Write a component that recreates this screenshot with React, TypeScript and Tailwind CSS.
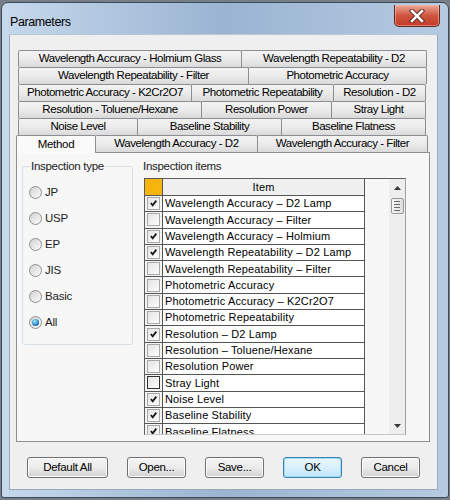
import React from "react";

type Tab = { label: string; w: string };

const TAB_ROWS: Tab[][] = [
  [
    { label: "Wavelength Accuracy - Holmium Glass", w: "w-[224px]" },
    { label: "Wavelength Repeatability - D2", w: "w-[186px]" },
  ],
  [
    { label: "Wavelength Repeatability - Filter", w: "w-[231px]" },
    { label: "Photometric Accuracy", w: "w-[179px]" },
  ],
  [
    { label: "Photometric Accuracy - K2Cr2O7", w: "w-[174px]" },
    { label: "Photometric Repeatability", w: "w-[143px]" },
    { label: "Resolution - D2", w: "w-[93px]" },
  ],
  [
    { label: "Resolution - Toluene/Hexane", w: "w-[184px]" },
    { label: "Resolution Power", w: "w-[131px]" },
    { label: "Stray Light", w: "w-[95px]" },
  ],
  [
    { label: "Noise Level", w: "w-[120px]" },
    { label: "Baseline Stability", w: "w-[145px]" },
    { label: "Baseline Flatness", w: "w-[145px]" },
  ],
];

const ITEMS: { label: string; checked: boolean; focus?: boolean }[] = [
  { label: "Wavelength Accuracy – D2 Lamp", checked: true },
  { label: "Wavelength Accuracy – Filter", checked: false },
  { label: "Wavelength Accuracy – Holmium", checked: true },
  { label: "Wavelength Repeatability – D2 Lamp", checked: true },
  { label: "Wavelength Repeatability – Filter", checked: false },
  { label: "Photometric Accuracy", checked: false },
  { label: "Photometric Accuracy – K2Cr2O7", checked: false },
  { label: "Photometric Repeatability", checked: false },
  { label: "Resolution – D2 Lamp", checked: true },
  { label: "Resolution – Toluene/Hexane", checked: false },
  { label: "Resolution Power", checked: false },
  { label: "Stray Light", checked: false, focus: true },
  { label: "Noise Level", checked: true },
  { label: "Baseline Stability", checked: true },
  { label: "Baseline Flatness", checked: true },
];

const RADIOS = ["JP", "USP", "EP", "JIS", "Basic", "All"];

const tabBase =
  "h-[17px] -ml-px first:ml-0 flex items-center justify-center border border-b-0 border-[#8c8e94] rounded-t-[2px] bg-gradient-to-b from-[#f3f3f3] via-[#ebebeb] to-[#dadada] text-[11.5px] tracking-[-0.45px] text-black whitespace-nowrap";

function TabRow({ tabs }: { tabs: Tab[] }) {
  return (
    <div className="flex ml-[2px] h-[17px]">
      {tabs.map((t) => (
        <div key={t.label} className={`${tabBase} ${t.w}`}>
          {t.label}
        </div>
      ))}
    </div>
  );
}

function Radio({ label, checked }: { label: string; checked?: boolean }) {
  return (
    <div className="flex items-center h-[13px]">
      <span className="w-[13px] h-[13px] rounded-full border border-[#8e8f8f] bg-gradient-to-br from-[#d2d2d2] to-[#fbfbfb] flex items-center justify-center">
        {checked && (
          <span className="w-[7px] h-[7px] rounded-full bg-[radial-gradient(circle_at_40%_35%,#a9ecff,#2a86c8_55%,#0c3e70)]" />
        )}
      </span>
      <span className="ml-[3px] text-[11.5px] tracking-[-0.2px] leading-[13px] text-[#222]">{label}</span>
    </div>
  );
}

function Check({ checked, focus }: { checked: boolean; focus?: boolean }) {
  return (
    <span
      className={`w-[13px] h-[13px] flex items-center justify-center bg-gradient-to-br from-[#e4e4e4] to-[#fdfdfd] border ${
        focus ? "border-[#333]" : "border-[#a8a8a8]"
      }`}
    >
      {checked && (
        <svg width="9" height="9" viewBox="0 0 9 9">
          <path d="M1.8 4 L3.7 6.4 L7.3 1.6" fill="none" stroke="#1a1a1a" strokeWidth="1.8" />
        </svg>
      )}
    </span>
  );
}

function Button({ label, w, primary }: { label: string; w: string; primary?: boolean }) {
  return (
    <button
      className={`${w} h-[21px] rounded-[3px] border text-[11.5px] tracking-[-0.3px] text-black flex items-center justify-center ${
        primary
          ? "border-[#3c7fb1] bg-gradient-to-b from-[#eaf6fd] via-[#d9f0fc] to-[#bee6fd] shadow-[inset_0_0_0_1px_#9fdcf6]"
          : "border-[#707070] bg-gradient-to-b from-[#f4f4f4] via-[#ebebeb] to-[#d2d2d2] shadow-[inset_0_0_0_1px_#fcfcfc]"
      }`}
    >
      {label}
    </button>
  );
}

export default function App() {
  return (
    <div
      className="w-[450px] h-[500px] bg-[#767e88] pt-[2px] px-[1px]"
      style={{ fontFamily: '"Liberation Sans", Arial, sans-serif' }}
    >
      <div className="w-[448px] h-[496px] rounded-t-[7px] rounded-b-[3px] border border-[#3f4a58] bg-gradient-to-r from-[#c6d8ec] via-[#9ab4d2] to-[#b6cbe2] flex flex-col">
        {/* title bar */}
        <div className="h-[31px] flex items-start justify-between">
          <span className="pl-[8px] pt-[11px] text-[12.5px] leading-[16px] text-black tracking-[-0.4px]">
            Parameters
          </span>
          <div className="mr-[8px] mt-[2px] w-[46px] h-[22px] rounded-b-[5px] border border-t-0 border-[#5e2a22] bg-gradient-to-b from-[#e9a898] via-[#cf5540] to-[#c23a26] flex items-center justify-center shadow-[inset_0_0_0_1px_rgba(255,210,200,0.45)]">
            <svg width="16" height="14" viewBox="0 0 16 14">
              <path d="M3 2 L13 12 M13 2 L3 12" stroke="#5a1e16" strokeWidth="4.4" strokeLinecap="square" />
              <path d="M3 2 L13 12 M13 2 L3 12" stroke="#ffffff" strokeWidth="2.6" strokeLinecap="square" />
            </svg>
          </div>
        </div>

        {/* client area */}
        <div className="ml-[7px] w-[429px] h-[456px] bg-[#efefef] border border-[#9aaabd] border-t-[#b8c6d6] pt-[15px] px-[6px] flex flex-col">
          {TAB_ROWS.map((row, i) => (
            <TabRow key={i} tabs={row} />
          ))}
          <div className="flex h-[17px] items-end">
            <div className="w-[80px] h-[18px] -mb-px relative z-10 flex items-center justify-center border border-b-0 border-[#8c8e94] rounded-t-[2px] bg-[#fbfbfb] text-[11.5px] tracking-[-0.3px] text-black">
              Method
            </div>
            <div className={`${tabBase} w-[163px] h-[15px]`}>Wavelength Accuracy - D2</div>
            <div className={`${tabBase} w-[171px] h-[15px]`}>Wavelength Accuracy - Filter</div>
          </div>

          {/* tab page */}
          <div className="w-[414px] h-[290px] border border-[#8c8e94] bg-[#f7f7f7] pt-[6px] pl-[5px] flex gap-[11px]">
            <fieldset className="w-[111px] h-[186px] border border-[#d5dfe5] rounded-[3px] px-[6px]">
              <legend className="ml-[1px] px-[1px] text-[11.5px] tracking-[-0.3px] leading-[14px] text-[#222]">
                Inspection type
              </legend>
              <div className="flex flex-col gap-[13px] pt-[13px]">
                {RADIOS.map((r) => (
                  <Radio key={r} label={r} checked={r === "All"} />
                ))}
              </div>
            </fieldset>

            <div className="flex flex-col">
              <div className="h-[14px] text-[11.5px] tracking-[-0.3px] leading-[14px] text-[#222] -ml-px">
                Inspection items
              </div>
              <div className="mt-[5px] w-[262px] h-[257px] border border-[#5c5c5c] border-r-[#a0a0a0] border-b-[#c8c8c8] bg-[#f6f6f6] flex overflow-hidden">
                <div className="w-[220px] flex flex-col border-r border-[#555]">
                  <div className="h-[17px] flex border-b border-[#555] shrink-0">
                    <div className="w-[18px] bg-[#f5b50e] border-r border-[#555]" />
                    <div className="flex-1 bg-[#f0f0f0] flex items-center justify-center text-[11px] text-black tracking-[0.2px]">
                      Item
                    </div>
                  </div>
                  {ITEMS.map((it) => (
                    <div key={it.label} className="h-[16.3px] shrink-0 flex border-b border-[#555] bg-white">
                      <div className="w-[18px] border-r border-[#555] flex items-center justify-center bg-[#f4f4f4]">
                        <Check checked={it.checked} focus={it.focus} />
                      </div>
                      <div className="flex-1 pl-[2px] flex items-center text-[11px] tracking-[0.15px] text-black whitespace-nowrap overflow-hidden">
                        {it.label}
                      </div>
                    </div>
                  ))}
                </div>
                <div className="w-[24px] bg-[#f7f7f7]" />
                <div className="w-[16px] bg-[#eeeeee] flex flex-col items-center justify-between pt-[7px] pb-[6px]">
                  <div className="flex flex-col items-center">
                    <svg width="7" height="4" viewBox="0 0 7 4">
                      <path d="M0 4 L3.5 0 L7 4 Z" fill="#3a3a3a" />
                    </svg>
                    <div className="mt-[8px] w-[13px] h-[16px] rounded-[2px] border border-[#9a9a9a] bg-gradient-to-r from-[#f6f6f6] to-[#dedede] flex flex-col items-center justify-center gap-[2px]">
                      <span className="w-[6px] h-px bg-[#6a6a6a]" />
                      <span className="w-[6px] h-px bg-[#6a6a6a]" />
                      <span className="w-[6px] h-px bg-[#6a6a6a]" />
                      <span className="w-[6px] h-px bg-[#6a6a6a]" />
                    </div>
                  </div>
                  <svg width="7" height="4" viewBox="0 0 7 4">
                    <path d="M0 0 L7 0 L3.5 4 Z" fill="#3a3a3a" />
                  </svg>
                </div>
              </div>
            </div>
          </div>

          {/* buttons */}
          <div className="mt-[15px] pl-[11px] flex gap-[19px]">
            <Button label="Default All" w="w-[81px]" />
            <Button label="Open..." w="w-[59px]" />
            <Button label="Save..." w="w-[59px]" />
            <Button label="OK" w="w-[59px]" primary />
            <Button label="Cancel" w="w-[59px]" />
          </div>
        </div>
      </div>
    </div>
  );
}
